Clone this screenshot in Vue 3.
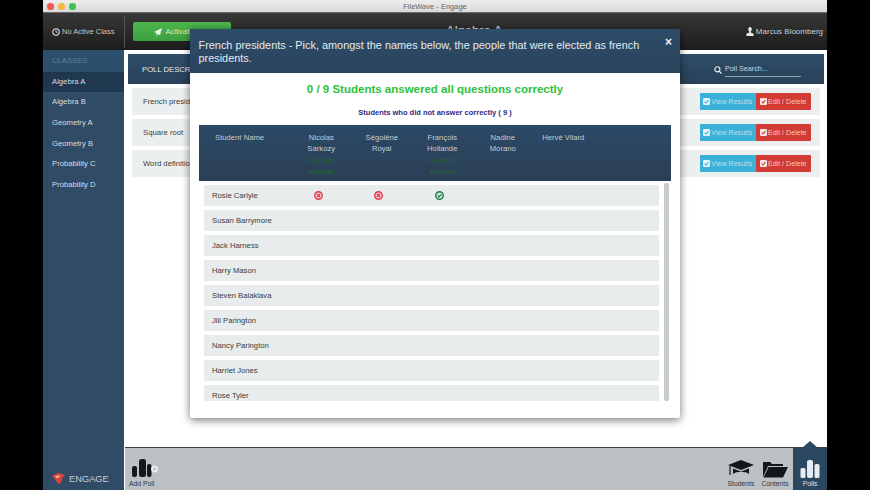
<script setup>
const classes = ['Algebra A', 'Algebra B', 'Geometry A', 'Geometry B', 'Probability C', 'Probability D']
const polls = ['French presidents', 'Square root', 'Word definition']
const columns = [
  { lines: ['Nicolas', 'Sarkozy'], correct: true },
  { lines: ['Ségolène', 'Royal'], correct: false },
  { lines: ['François', 'Hollande'], correct: true },
  { lines: ['Nadine', 'Morano'], correct: false },
  { lines: ['Hervé Vilard'], correct: false }
]
const students = [
  { name: 'Rosie Carlyle', marks: ['no', 'no', 'ok'] },
  { name: 'Susan Barrymore', marks: [] },
  { name: 'Jack Harness', marks: [] },
  { name: 'Harry Mason', marks: [] },
  { name: 'Steven Balaklava', marks: [] },
  { name: 'Jill Parington', marks: [] },
  { name: 'Nancy Parington', marks: [] },
  { name: 'Harriet Jones', marks: [] },
  { name: 'Rose Tyler', marks: [] }
]
</script>

<template>
  <div class="window">
    <div class="titlebar">
      <div class="lights"><i class="red"></i><i class="yellow"></i><i class="green"></i></div>
      <span>FileWave - Engage</span>
    </div>
    <div class="topbar">
      <div class="active-class">
        <svg width="8" height="8" viewBox="0 0 10 10"><circle cx="5" cy="5" r="4" fill="none" stroke="#e8e8e8" stroke-width="1.3"/><path d="M5 2.6V5.3H7" fill="none" stroke="#e8e8e8" stroke-width="1"/></svg>
        No Active Class
      </div>
      <button class="activate">
        <svg width="8" height="8" viewBox="0 0 10 10"><path d="M10 0 0 5l3 1.4V10l2-2.4L7.5 9z" fill="#e8f5e4"/></svg>
        Activate Poll
      </button>
      <div class="class-title">Algebra A</div>
      <div class="user">
        <svg width="8" height="9" viewBox="0 0 10 11"><path d="M5 0C3.4 0 2.8 1.2 2.8 2.8c0 1.2.5 2.2 1.2 2.8v1L.5 8.2V11h9V8.2L6 6.600v-1c.7-.6 1.200-1.600 1.200-2.800C7.200 1.200 6.600 0 5 0z" fill="#e8e8e8"/></svg>
        Marcus Bloomberg
      </div>
    </div>
    <div class="body">
      <aside class="sidebar">
        <div class="classes-title">CLASSES</div>
        <div v-for="(c, i) in classes" :key="c" class="class-item" :class="{ selected: i === 0 }">{{ c }}</div>
        <div class="brand">
          <svg width="13" height="11" viewBox="0 0 14 12"><path d="M0 3 6 0l8 2-3 4-1 4-3 2-3-4z" fill="#d9433f"/><path d="M3 3.500 9 2.500 6 6z" fill="#f3b8b0"/></svg>
          ENGAGE
        </div>
      </aside>
      <div class="content">
        <main class="main">
          <div class="poll-head">
            <span class="poll-label">POLL DESCRIPTION</span>
            <div class="search">
              <svg width="8" height="8" viewBox="0 0 10 10"><circle cx="4.200" cy="4.200" r="3.200" fill="none" stroke="#e8edf2" stroke-width="1.400"/><path d="M6.600 6.600 9.500 9.500" stroke="#e8edf2" stroke-width="1.500"/></svg>
              <span class="search-input">Poll Search...</span>
            </div>
          </div>
          <div v-for="p in polls" :key="p" class="poll-row">
            <span>{{ p }}</span>
            <div class="btns">
              <span class="btn view"><svg width="7" height="7" viewBox="0 0 8 8"><rect width="8" height="8" rx="1.500" fill="#e7f5fa"/><path d="M1.800 4 3.400 5.600 6.300 2.400" fill="none" stroke="#3bb0d8" stroke-width="1.200"/></svg>View Results</span>
              <span class="btn edit"><svg width="7" height="7" viewBox="0 0 8 8"><rect width="8" height="8" rx="1.500" fill="#fbe5e3"/><path d="M1.800 4 3.400 5.600 6.300 2.400" fill="none" stroke="#d33b35" stroke-width="1.200"/></svg>Edit / Delete</span>
            </div>
          </div>
        </main>
        <footer class="dock">
          <div class="dock-item add">
            <svg width="32" height="21" viewBox="0 0 32 21">
              <rect x="3" y="9" width="5" height="11" rx="2" fill="#16191c"/>
              <rect x="10" y="2" width="7" height="18" rx="2.500" fill="#16191c"/>
              <rect x="18" y="7" width="4.500" height="13" rx="2" fill="#16191c"/>
              <circle cx="25.500" cy="12" r="2.500" fill="none" stroke="#eef0f2" stroke-width="1.800"/>
            </svg>
            <span>Add Poll</span>
          </div>
          <div class="dock-right">
            <div class="dock-item">
              <svg width="26" height="19" viewBox="0 0 26 19">
                <path d="M13 1 26 6 13 11 0 6z" fill="#14171a"/>
                <path d="M5 9.500V15c3-3 13-3 16 0V9.500L13 12.500z" fill="#14171a"/>
                <path d="M2 7v9" stroke="#14171a" stroke-width="1.200"/>
              </svg>
              <span>Students</span>
            </div>
            <div class="dock-item">
              <svg width="26" height="19" viewBox="0 0 26 19">
                <path d="M1 18V3h7l2 2h11v2H6z" fill="#14171a"/>
                <path d="M6.500 8H26l-5 10.500H1.500z" fill="#14171a"/>
              </svg>
              <span>Contents</span>
            </div>
            <div class="dock-item polls">
              <svg width="20" height="19" viewBox="0 0 20 19">
                <rect x="0.500" y="9" width="5" height="10" rx="1.500" fill="#e6ebf0"/>
                <rect x="7" y="1" width="6" height="18" rx="2" fill="#e6ebf0"/>
                <rect x="14.500" y="5" width="5" height="14" rx="1.500" fill="#e6ebf0"/>
              </svg>
              <span>Polls</span>
            </div>
          </div>
        </footer>
      </div>
    </div>

    <section class="modal">
      <header class="modal-head">
        <p>French presidents - Pick, amongst the names below, the people that were elected as french presidents.</p>
        <span class="close">×</span>
      </header>
      <div class="modal-body">
        <h2>0 / 9 Students answered all questions correctly</h2>
        <h3>Students who did not answer correctly ( 9 )</h3>
        <div class="results-head">
          <div class="name-col">Student Name</div>
          <div v-for="c in columns" :key="c.lines[0]" class="answer-col">
            <div v-for="l in c.lines" :key="l">{{ l }}</div>
            <template v-if="c.correct">
              <div class="right-answer">Correct</div>
              <div class="right-answer">Answer</div>
            </template>
          </div>
        </div>
        <div class="results-list">
          <div v-for="s in students" :key="s.name" class="student">
            <div class="student-name">{{ s.name }}</div>
            <div v-for="(m, i) in s.marks" :key="i" class="mark">
              <svg v-if="m === 'no'" width="9" height="9" viewBox="0 0 10 10"><circle cx="5" cy="5" r="4.200" fill="#f6c9cf" stroke="#e5354a" stroke-width="1.500"/><path d="M3.300 3.300 6.700 6.700M6.700 3.300 3.300 6.700" stroke="#e5354a" stroke-width="1.400"/></svg>
              <svg v-else width="9" height="9" viewBox="0 0 10 10"><circle cx="5" cy="5" r="4.200" fill="#cfe8d8" stroke="#1f7d45" stroke-width="1.500"/><path d="M3 5.100 4.500 6.600 7.100 3.700" fill="none" stroke="#1f7d45" stroke-width="1.400"/></svg>
            </div>
          </div>
          <div class="scrollbar"></div>
        </div>
      </div>
    </section>
  </div>
</template>

<style>
html, body { margin: 0; background: #000; overflow: hidden; }
</style>

<style scoped>
.window {
  position: relative;
  box-sizing: border-box;
  width: 784px;
  height: 490px;
  margin-left: 43px;
  display: flex;
  flex-direction: column;
  font-family: "Liberation Sans", Arial, sans-serif;
  background: #fff;
  overflow: hidden;
}
.titlebar {
  flex: 0 0 13px;
  background: linear-gradient(#ededed, #d9d9d9);
  border-bottom: 1px solid #6b6b6b;
  box-sizing: border-box;
  display: flex;
  align-items: center;
  justify-content: center;
  position: relative;
  font-size: 7.500px;
  color: #666;
}
.lights { position: absolute; left: 4px; top: 3px; display: flex; gap: 4.500px; }
.lights i { display: block; width: 6.500px; height: 6.500px; border-radius: 50%; }
.red { background: #ef5a52; }
.yellow { background: #f4b93f; }
.green { background: #3fc14f; }
.topbar {
  flex: 0 0 37px;
  background: linear-gradient(#383838, #1d1c1c);
  display: flex;
  align-items: center;
  color: #c8c8c8;
  font-size: 8px;
  position: relative;
}
.active-class {
  width: 82px;
  height: 32px;
  box-sizing: border-box;
  border-right: 1px solid #555;
  padding-left: 9px;
  display: flex;
  align-items: center;
  gap: 2px;
  font-size: 7.500px;
  color: #c4c4c4;
}
.activate {
  margin-left: 8px;
  width: 98px;
  height: 19px;
  border: 0;
  border-radius: 2px;
  background: linear-gradient(#4db64c, #3c9f40);
  color: #cfe8ca;
  font: 8px "Liberation Sans", Arial, sans-serif;
  display: flex;
  align-items: center;
  justify-content: center;
  gap: 3px;
}
.class-title {
  position: absolute;
  left: 403px;
  top: 10px;
  font-size: 13px;
  color: #e4e4e4;
}
.user {
  margin-left: auto;
  margin-right: 4px;
  display: flex;
  align-items: center;
  gap: 2px;
  font-size: 8px;
  color: #cdcdcd;
}
.body { flex: 1; display: flex; min-height: 0; }
.sidebar {
  width: 82px;
  background: #2f4b65;
  display: flex;
  flex-direction: column;
  position: relative;
  border-right: 1px solid #fff;
  box-sizing: border-box;
  font-size: 7.700px;
  color: #d5dee6;
}
.classes-title { height: 21.500px; line-height: 21px; padding-left: 9px; color: #5f7f99; background: #2c4f6d; }
.class-item { height: 20.700px; line-height: 19px; padding-left: 9px; }
.class-item.selected { background: #1f3850; }
.brand {
  position: absolute;
  left: 9px;
  bottom: 6px;
  display: flex;
  align-items: center;
  gap: 4px;
  font-size: 9.300px;
  color: #c4ced6;
}
.content { flex: 1; min-width: 0; display: flex; flex-direction: column; }
.main { flex: 1; padding: 4px 3px 0 3px; background: #fff; }
.poll-head {
  height: 30px;
  background: linear-gradient(#2e4d6a, #2a4057);
  display: flex;
  align-items: center;
  justify-content: space-between;
  padding: 0 23px 0 14px;
  color: #e8edf2;
  font-size: 7.700px;
  margin-bottom: 4px;
}
.poll-label { color: #e6ebf0; }
.search { display: flex; align-items: center; gap: 3px; padding-top: 1px; }
.search-input { width: 76px; box-sizing: border-box; border-bottom: 1px solid #8da0b2; padding-bottom: 3px; padding-top: 2px; font-size: 7.200px; color: #cdd7e0; }
.poll-row {
  height: 27px;
  margin: 0 4px 4px 4px;
  box-sizing: border-box;
  background: #ecefef;
  display: flex;
  align-items: center;
  justify-content: space-between;
  padding: 0 9px 0 11px;
  font-size: 7.700px;
  color: #3b3b3b;
}
.btns { display: flex; }
.btn {
  display: flex;
  align-items: center;
  justify-content: center;
  gap: 1px;
  width: 55.500px;
  height: 16.500px;
  font-size: 7.100px;
  box-sizing: border-box;
}
.btn.view { background: #3bb0d8; color: #b8e2f0; border-radius: 1px 0 0 1px; }
.btn.edit { background: #d33b35; color: #f3c6c2; border-radius: 0 1px 1px 0; }
.dock {
  flex: 0 0 43px;
  box-sizing: border-box;
  background: #bcc1c6;
  border-top: 1px solid #3c3f42;
  display: flex;
  justify-content: space-between;
}
.dock-item {
  display: flex;
  flex-direction: column;
  align-items: center;
  justify-content: flex-end;
  padding-bottom: 3px;
  font-size: 6.800px;
  color: #33363a;
  gap: 2px;
}
.dock-item.add { margin-left: 4px; align-items: flex-start; }
.dock-right { display: flex; align-items: stretch; }
.dock-right .dock-item { width: 34px; }
.dock-item.polls {
  background: #2c4860;
  color: #d9e1e8;
  position: relative;
  margin-left: 1px;
}
.dock-item.polls::before {
  content: "";
  position: absolute;
  top: -7px;
  left: 9px;
  border-left: 8px solid transparent;
  border-right: 8px solid transparent;
  border-bottom: 7px solid #2c4860;
}
.modal {
  position: absolute;
  left: 147px;
  top: 29px;
  width: 490px;
  height: 389px;
  background: #fff;
  border-radius: 2px;
  box-shadow: 0 2px 8px rgba(0, 0, 0, .55);
  display: flex;
  flex-direction: column;
}
.modal-head {
  flex: 0 0 44px;
  box-sizing: border-box;
  background: linear-gradient(#2d4c69, #2a435c);
  color: #e4e9ee;
  padding: 9.500px 20px 0 8.500px;
  position: relative;
  font-size: 10.900px;
  line-height: 13.200px;
}
.modal-head p { margin: 0; }
.close { position: absolute; right: 8px; top: 7px; font-size: 12px; font-weight: bold; color: #f2f2f2; }
.modal-body { flex: 1; padding: 0 9px; display: flex; flex-direction: column; min-height: 0; }
h2 { margin: 9px 0 0; height: 15px; line-height: 15px; text-align: center; font-size: 11.500px; font-weight: bold; color: #2ec13a; }
h3 { margin: 11px 0 0; height: 10px; line-height: 10px; text-align: center; font-size: 7.500px; font-weight: bold; color: #2c2a86; }
.results-head {
  margin-top: 7px;
  flex: 0 0 56px;
  background: linear-gradient(#2b4966, #2b3f55);
  display: grid;
  grid-template-columns: 92px repeat(5, 60.500px);
  padding-top: 6.500px;
  box-sizing: border-box;
  font-size: 7.700px;
  line-height: 11.500px;
  color: #c2ccd6;
}
.name-col { padding-left: 16px; }
.answer-col { text-align: center; }
.right-answer { color: #1f6a2a; }
.results-list {
  position: relative;
  margin-top: 1px;
  height: 219px;
  overflow: hidden;
  padding: 3px 0 0 5px;
  box-sizing: border-box;
}
.student {
  width: 455px;
  height: 21px;
  margin-bottom: 4px;
  background: #e9ecec;
  display: flex;
  align-items: center;
  font-size: 7.700px;
  color: #3b3b3b;
}
.student-name { width: 84px; padding-left: 8px; box-sizing: border-box; flex: none; }
.mark { width: 60.500px; display: flex; justify-content: center; flex: none; }
.scrollbar { position: absolute; left: 465px; top: 1px; width: 5px; height: 218px; background: #c8cbce; border-radius: 2px; }
</style>
